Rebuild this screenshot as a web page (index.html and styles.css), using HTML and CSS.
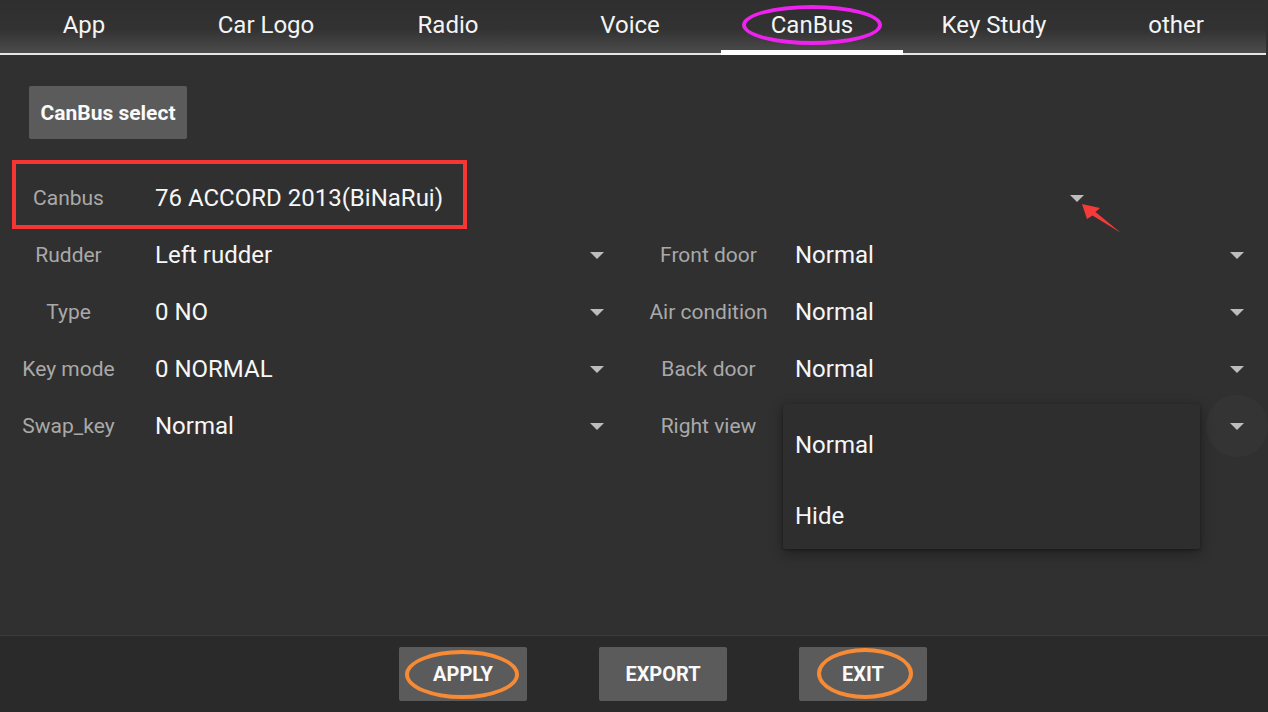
FILE: index.html
```html
<!DOCTYPE html>
<html>
<head>
  <meta charset="utf-8">
  <title>CanBus settings</title>
  <link rel="stylesheet" href="styles.css">
</head>
<body>
  <div id=screen>
    <div id=tabs>
      <div class=tab>App</div>
      <div class=tab>Car Logo</div>
      <div class=tab>Radio</div>
      <div class=tab>Voice</div>
      <div class="tab active">CanBus</div>
      <div class=tab>Key Study</div>
      <div class=tab>other</div>
    </div>

    <div id=content>
      <div class=select-wrap><button class=btn>CanBus select</button></div>

      <div class="field wide">
        <div class=label>Canbus</div>
        <div class=value>76 ACCORD 2013(BiNaRui)</div>
        <div class=arrow></div>
      </div>

      <div class=grid>
        <div class=field><div class=label>Rudder</div><div class=value>Left rudder</div><div class=arrow></div></div>
        <div class=field><div class=label>Front door</div><div class=value>Normal</div><div class=arrow></div></div>
        <div class=field><div class=label>Type</div><div class=value>0 NO</div><div class=arrow></div></div>
        <div class=field><div class=label>Air condition</div><div class=value>Normal</div><div class=arrow></div></div>
        <div class=field><div class=label>Key mode</div><div class=value>0 NORMAL</div><div class=arrow></div></div>
        <div class=field><div class=label>Back door</div><div class=value>Normal</div><div class=arrow></div></div>
        <div class=field><div class=label>Swap_key</div><div class=value>Normal</div><div class=arrow></div></div>
        <div class=field><div class=label>Right view</div><div class=value></div><div class="arrow pressed"></div></div>
      </div>

      <div id=popup>
        <div class=item>Normal</div>
        <div class=item>Hide</div>
      </div>
    </div>

    <div id=actions>
      <button class=btn>APPLY</button>
      <button class=btn>EXPORT</button>
      <button class=btn>EXIT</button>
    </div>

    <!-- annotation marks drawn over the screenshot -->
    <div class="mark tab-mark"></div>
    <div class="mark canbus-mark"></div>
    <div class="mark apply-mark"></div>
    <div class="mark exit-mark"></div>
    <svg class=pointer width="50" height="40" viewBox="0 0 50 40">
      <path d="M2 4 L20 8 L15.5 12 L41 33 L12.5 15.5 L7 19 Z" fill="#f53a3a"/>
    </svg>
  </div>
</body>
</html>
```

FILE: styles.css
```css
html, body {
  margin: 0;
  height: 100%;
  background: #303030;
}
body {
  font-family: Roboto, "Noto Sans", sans-serif;
  color: #f2f2f2;
  overflow: hidden;
}
#screen {
  position: relative;
  width: 1268px;
  height: 712px;
  display: flex;
  flex-direction: column;
}

/* tab strip */
#tabs {
  height: 53px;
  display: grid;
  grid-template-columns: repeat(7, 182px);
  margin-left: -7px;
  background: linear-gradient(#2f2f2f 0%, #323232 55%, #4c4c4c 100%);
  border-bottom: 2px solid #e6e6e6;
  margin-right: 2px;
}
.tab {
  font-size: 24px;
  text-align: center;
  line-height: 51px;
  color: #f4f4f4;
  position: relative;
}
.tab.active::after {
  content: '';
  position: absolute;
  left: 0;
  right: 0;
  bottom: -2px;
  height: 5px;
  background: #fff;
}

/* main area */
#content {
  flex: 1;
  position: relative;
  padding-top: 31px;
}
.select-wrap {
  padding-left: 29px;
  height: 83px;
}
.btn {
  font-family: Roboto, "Noto Sans", sans-serif;
  font-weight: bold;
  font-size: 20px;
  color: #fafafa;
  background: #5b5b5b;
  border: none;
  border-radius: 2px;
  padding: 0;
  height: 54px;
}
.select-wrap .btn {
  width: 158px;
  height: 53px;
  font-size: 21px;
}

.field {
  display: flex;
  align-items: center;
  height: 57px;
}
.label {
  width: 137px;
  text-align: center;
  font-size: 21px;
  color: #a9a9a9;
  white-space: nowrap;
}
.value {
  margin-left: 18px;
  width: 430px;
  font-size: 24px;
  color: #f6f6f6;
  white-space: nowrap;
}
.wide .value {
  width: 910px;
}
.arrow {
  width: 24px;
  height: 24px;
  position: relative;
}
.arrow::before {
  content: '';
  position: absolute;
  left: 5px;
  top: 9px;
  border-left: 7px solid transparent;
  border-right: 7px solid transparent;
  border-top: 7px solid #bdbdbd;
}
.arrow.pressed::after {
  content: '';
  position: absolute;
  left: -19px;
  top: -19px;
  width: 62px;
  height: 62px;
  border-radius: 50%;
  background: rgba(255, 255, 255, 0.025);
}
.grid {
  display: grid;
  grid-template-columns: 640px 628px;
}

#popup {
  position: absolute;
  left: 783px;
  top: 349px;
  width: 417px;
  height: 139px;
  padding-top: 6px;
  overflow: hidden;
  background: #2e2e2e;
  border-radius: 2px;
  box-shadow: 0 4px 14px rgba(0, 0, 0, 0.35), 0 1px 3px rgba(0, 0, 0, 0.3);
}
#popup .item {
  height: 71px;
  line-height: 71px;
  padding-left: 12px;
  font-size: 24px;
  color: #f6f6f6;
}

/* bottom buttons */
#actions {
  height: 77px;
  box-sizing: border-box;
  border-top: 1px solid #3b3b3b;
  background: #2a2a2a;
  display: flex;
  align-items: flex-start;
  gap: 72px;
  padding: 11px 0 0 399px;
}
#actions .btn {
  width: 128px;
}

/* annotations */
.mark {
  position: absolute;
  box-sizing: border-box;
}
.tab-mark {
  left: 742px;
  top: 5px;
  width: 140px;
  height: 40px;
  border: 4px solid #ee22ee;
  border-radius: 50%;
}
.canbus-mark {
  left: 12px;
  top: 160px;
  width: 455px;
  height: 69px;
  border: 4px solid #f83535;
}
.apply-mark {
  left: 405px;
  top: 650px;
  width: 114px;
  height: 49px;
  border: 4px solid #f78b35;
  border-radius: 50%;
}
.exit-mark {
  left: 817px;
  top: 648px;
  width: 96px;
  height: 51px;
  border: 4px solid #f78b35;
  border-radius: 50%;
}
.pointer {
  position: absolute;
  left: 1080px;
  top: 200px;
}
```
